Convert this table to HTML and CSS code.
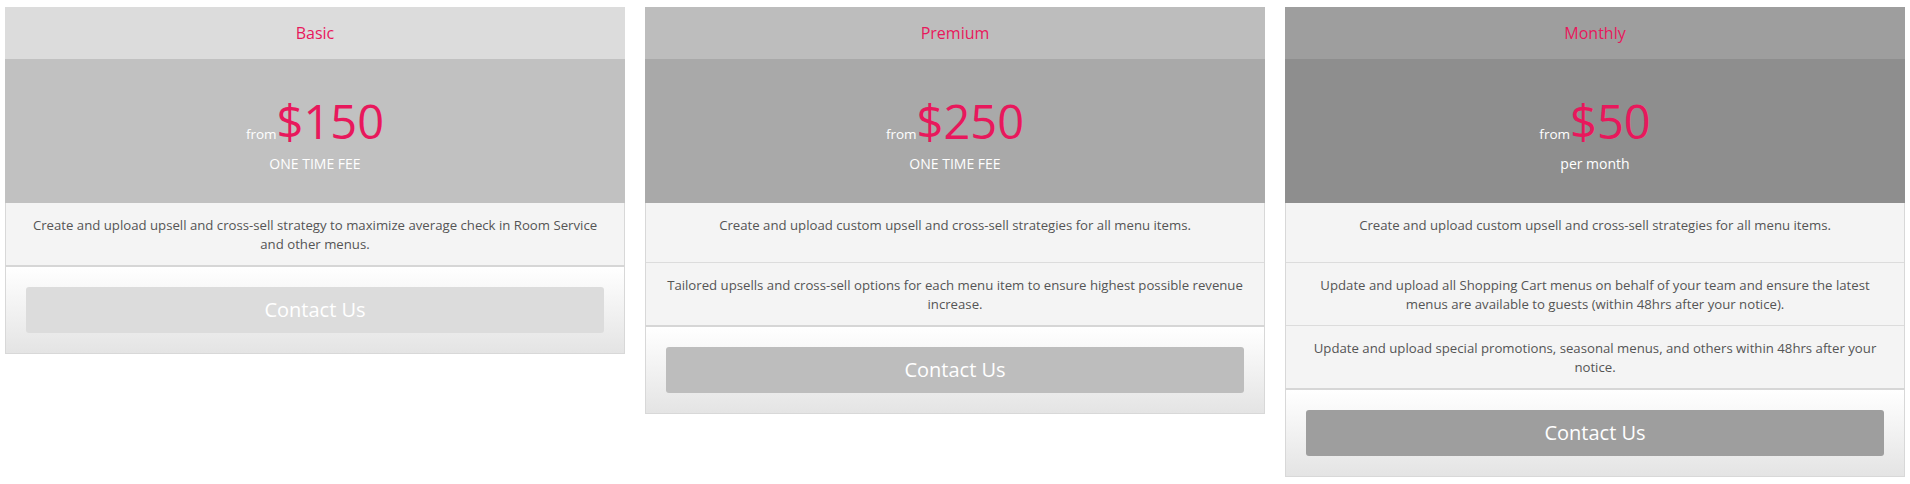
FILE: index.html
```html
<!DOCTYPE html>
<html lang="en">
<head>
<meta charset="utf-8">
<title>Pricing</title>
<link rel="stylesheet" href="styles.css">
</head>
<body>
<div class="pricing">
  <div class="plan plan-basic">
    <div class="plan-title">Basic</div>
    <div class="plan-price">
      <div class="price-line"><span class="from">from</span><span class="amount">$150</span></div>
      <div class="price-note upper">ONE TIME FEE</div>
    </div>
    <ul class="features">
      <li>Create and upload upsell and cross-sell strategy to maximize average check in Room Service and other menus.</li>
    </ul>
    <div class="plan-footer"><a class="btn" href="#">Contact Us</a></div>
  </div>
  <div class="plan plan-premium">
    <div class="plan-title">Premium</div>
    <div class="plan-price">
      <div class="price-line"><span class="from">from</span><span class="amount">$250</span></div>
      <div class="price-note upper">ONE TIME FEE</div>
    </div>
    <ul class="features">
      <li>Create and upload custom upsell and cross-sell strategies for all menu items.</li>
      <li>Tailored upsells and cross-sell options for each menu item to ensure highest possible revenue increase.</li>
    </ul>
    <div class="plan-footer"><a class="btn" href="#">Contact Us</a></div>
  </div>
  <div class="plan plan-monthly">
    <div class="plan-title">Monthly</div>
    <div class="plan-price">
      <div class="price-line"><span class="from">from</span><span class="amount">$50</span></div>
      <div class="price-note">per month</div>
    </div>
    <ul class="features">
      <li>Create and upload custom upsell and cross-sell strategies for all menu items.</li>
      <li>Update and upload all Shopping Cart menus on behalf of your team and ensure the latest menus are available to guests (within 48hrs after your notice).</li>
      <li>Update and upload special promotions, seasonal menus, and others within 48hrs after your notice.</li>
    </ul>
    <div class="plan-footer"><a class="btn" href="#">Contact Us</a></div>
  </div>
</div>
</body>
</html>
```
FILE: styles.css
```css
* { box-sizing: border-box; }
html, body { margin: 0; background: #fff; }
body { font-family: "Open Sans", "Liberation Sans", sans-serif; color: #555; }

.pricing {
  display: flex;
  align-items: flex-start;
  gap: 20px;
  padding: 7px 5px;
}
.plan {
  flex: 1 1 0;
  display: flex;
  flex-direction: column;
  text-align: center;
}
.plan-title {
  height: 52px;
  line-height: 52px;
  font-size: 16px;
  color: #e8185c;
  background: #dcdcdc;
}
.plan-price {
  height: 144px;
  padding-top: 37px;
  background: #c1c1c1;
  color: #fff;
}
.price-line { height: 50px; line-height: 50px; }
.from { font-size: 13.5px; }
.amount { font-size: 47px; color: #e8185c; }
.price-note { margin-top: 8px; font-size: 14px; line-height: 20px; }

.features {
  list-style: none;
  margin: 0;
  padding: 0;
  background: #f4f4f4;
  border-left: 1px solid #d8d8d8;
  border-right: 1px solid #d8d8d8;
}
.features li {
  min-height: 60px;
  padding: 13px 15px 11px;
  font-size: 13.2px;
  line-height: 19px;
  color: #555;
  border-bottom: 1px solid #dcdcdc;
}
.features li:last-child { border-bottom: 0; }

.plan-footer {
  padding: 20px;
  border: 1px solid #d8d8d8;
  border-top: 2px solid #d6d6d6;
  background: linear-gradient(#ffffff, #e4e4e4);
}
.btn {
  display: block;
  height: 46px;
  line-height: 46px;
  border-radius: 3px;
  background: #dcdcdc;
  color: #fff;
  font-size: 20px;
  text-decoration: none;
}

.plan-premium .plan-title { background: #bdbdbd; }
.plan-premium .plan-price { background: #a9a9a9; }
.plan-premium .btn { background: #bdbdbd; }
.plan-monthly .plan-title { background: #9e9e9e; }
.plan-monthly .plan-price { background: #8e8e8e; }
.plan-monthly .btn { background: #9e9e9e; }
```
